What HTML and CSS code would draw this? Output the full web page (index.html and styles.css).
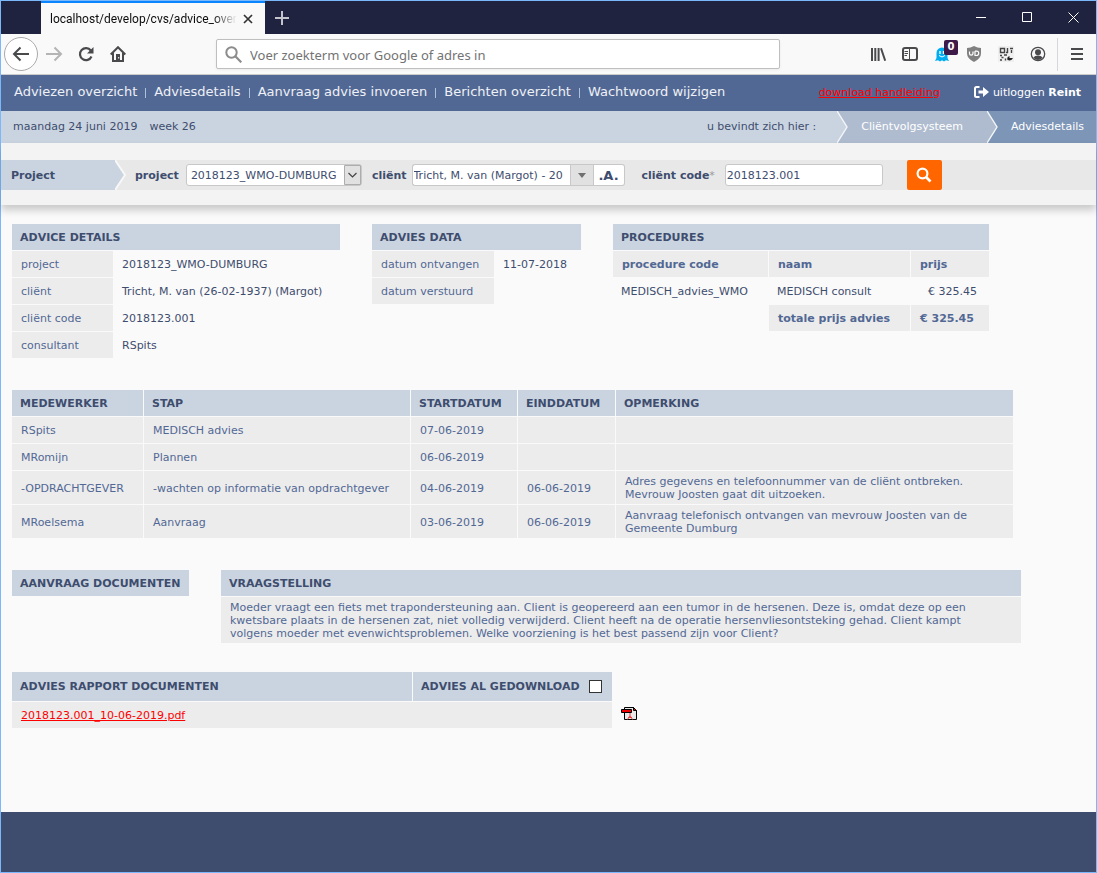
FILE: index.html
```html
<!DOCTYPE html>
<html lang="nl">
<head>
<meta charset="utf-8">
<meta name="viewport" content="width=device-width, initial-scale=1">
<title>Adviesdetails</title>
<link rel="stylesheet" href="styles.css">
</head>
<body>
<div class="window">
  <header class="titlebar">
    <div class="tab">
      <span class="tab-title">localhost/develop/cvs/advice_over</span>
      <button class="tab-close" aria-label="Tabblad sluiten"><svg width="10" height="10" viewBox="0 0 10 10"><path d="M1 1l8 8M9 1l-8 8" stroke="#333" stroke-width="1.7" fill="none"/></svg></button>
    </div>
    <button class="new-tab" aria-label="Nieuw tabblad"><svg width="14" height="14" viewBox="0 0 14 14"><path d="M7 0v14M0 7h14" stroke="#c4c4cc" stroke-width="2" fill="none"/></svg></button>
    <div class="window-buttons">
      <button aria-label="Minimaliseren"><svg width="11" height="11" viewBox="0 0 11 11"><path d="M0 5.500h10" stroke="#fff" fill="none"/></svg></button>
      <button aria-label="Maximaliseren"><svg width="11" height="11" viewBox="0 0 11 11"><path d="M.5.500h9v9h-9z" stroke="#fff" fill="none"/></svg></button>
      <button aria-label="Sluiten"><svg width="11" height="11" viewBox="0 0 11 11"><path d="M.5.500l10 10M10.500.500l-10 10" stroke="#fff" fill="none"/></svg></button>
    </div>
  </header>

  <div class="toolbar">
    <div class="toolbar-nav">
      <button class="back" aria-label="Terug"><svg width="18" height="16" viewBox="0 0 18 16"><path d="M17 8H2M8.500 1.500L2 8l6.500 6.500" stroke="#4a4a4d" stroke-width="2" fill="none"/></svg></button>
      <button aria-label="Vooruit"><svg width="18" height="16" viewBox="0 0 18 16"><path d="M1 8h15M9.500 1.500L16 8l-6.500 6.500" stroke="#b4b4b5" stroke-width="2" fill="none"/></svg></button>
      <button aria-label="Vernieuwen"><svg width="16" height="16" viewBox="0 0 16 16"><path d="M12.800 4.500A6 6 0 1 0 13.500 10.500" stroke="#4a4a4d" stroke-width="2.200" fill="none"/><path d="M15.500 1v6.500H9z" fill="#4a4a4d"/></svg></button>
      <button aria-label="Startpagina"><svg width="16" height="16" viewBox="0 0 16 16"><path d="M.7 8.500L8 1.200l7.300 7.300M3 7v8h10V7" stroke="#4a4a4d" stroke-width="2" fill="none"/><path d="M6 8h4v7H6z" fill="#4a4a4d"/><path d="M8.200 11h1v1.500h-1z" fill="#fff"/></svg></button>
    </div>
    <label class="urlbar">
      <svg width="17" height="17" viewBox="0 0 17 17"><circle cx="6.500" cy="6.500" r="5.200" stroke="#8c8c8c" stroke-width="2" fill="none"/><path d="M10.300 10.300l6 6" stroke="#8c8c8c" stroke-width="2.200"/></svg>
      <input type="text" placeholder="Voer zoekterm voor Google of adres in" aria-label="Adres">
    </label>
    <div class="toolbar-tools">
      <button aria-label="Bibliotheek"><svg width="16" height="16" viewBox="0 0 16 16"><path d="M2 2v13M5.300 2v13M8.600 2v13M11 2.300l4.200 12.400" stroke="#4a4a4d" stroke-width="2" fill="none"/></svg></button>
      <button aria-label="Zijbalk"><svg width="16" height="16" viewBox="0 0 16 16"><rect x="1" y="2" width="14" height="12" rx="2" stroke="#4a4a4d" stroke-width="2" fill="none"/><path d="M7.500 2v12M2.500 5.500H6M2.500 7.500H6M2.500 9.500H5" stroke="#4a4a4d" fill="none"/></svg></button>
      <button class="ghost" aria-label="Ghostery"><svg width="16" height="16" viewBox="0 0 16 16"><path d="M2.500 12V7a5.500 5.500 0 0 1 11 0v5l1.500 3-3-.8-2 1.300-2-1.200-2 1.200-2-1.200-3 .7z" fill="#00aef0"/><path d="M6 5v3M9.500 5v3" stroke="#fff" stroke-width="1.300"/><path d="M5 9.500q3 3 6 0" stroke="#fff" fill="none"/></svg><span class="badge">0</span></button>
      <button aria-label="uBlock"><svg width="16" height="16" viewBox="0 0 16 16"><path d="M8 0q3.500 2 7 2v5.500q0 5-7 8.500-7-3.500-7-8.500V2q3.500 0 7-2z" fill="#808080"/><path d="M3.500 5.500v2q0 1.700 1.700 1.700T7 7.500v-2M9 5v4.500h1.500q2.200 0 2.200-2.200T10.500 5.200H9" stroke="#fff" stroke-width="1.200" fill="none"/></svg></button>
      <button aria-label="QR-code"><svg width="16" height="16" viewBox="0 0 16 16"><path d="M0 0h16v16H0z" fill="#efefef"/><path d="M2.500 2.500h4v4h-4zM9.500 2v5M12 2.500h3M13.500 4v3M8 6.500h2M2 9.500h2M6 9h3M3.500 11.500h2M2 14h2M7.500 12.500v2" stroke="#444" stroke-width="1.400" fill="none"/><path d="M9.500 14q-1-3 2-4v2h3.500q-1.500 3.500-5.500 2z" fill="#222"/></svg></button>
      <button aria-label="Account"><svg width="16" height="16" viewBox="0 0 16 16"><circle cx="8" cy="8" r="6.700" stroke="#4a4a4d" stroke-width="1.300" fill="none"/><circle cx="8" cy="6.200" r="3" fill="#4a4a4d"/><path d="M3.300 11.500q1.700-2 4.700-2t4.700 2Q11 14 8 14t-4.700-2.500z" fill="#4a4a4d"/></svg></button>
      <span class="tool-divider"></span>
      <button aria-label="Menu"><svg width="14" height="14" viewBox="0 0 14 14"><path d="M1 2h12M1 7h12M1 12h12" stroke="#4a4a4d" stroke-width="2"/></svg></button>
    </div>
  </div>

  <nav class="mainnav">
    <ul class="menu">
      <li><a href="#">Adviezen overzicht</a></li>
      <li><a href="#">Adviesdetails</a></li>
      <li><a href="#">Aanvraag advies invoeren</a></li>
      <li><a href="#">Berichten overzicht</a></li>
      <li><a href="#">Wachtwoord wijzigen</a></li>
    </ul>
    <a class="manual" href="#">download handleiding</a>
    <a class="logout" href="#"><svg width="15" height="12" viewBox="0 0 15 12"><path d="M5.500 1H2.500Q1 1 1 2.500v7Q1 11 2.500 11h3" stroke="#fff" stroke-width="2" fill="none"/><path d="M4.500 4.500h4.500v-3.500l6 5-6 5v-3.500H4.500z" fill="#fff"/></svg><span>uitloggen <b>Reint</b></span></a>
  </nav>

  <div class="crumbs">
    <span>maandag 24 juni 2019</span>
    <span>week 26</span>
    <span class="here">u bevindt zich hier :</span>
    <a class="crumb crumb-mid" href="#"><svg width="12" height="32" viewBox="0 0 12 32"><path d="M0 0l10 16L0 32z" fill="#cad4e0"/><path d="M0 0l10 16L0 32" stroke="#f4f6f9" stroke-width="1.400" fill="none"/></svg><span>Cliëntvolgsysteem</span></a>
    <a class="crumb crumb-last" href="#"><svg width="12" height="32" viewBox="0 0 12 32"><path d="M0 0l10 16L0 32z" fill="#afbccf"/><path d="M0 0l10 16L0 32" stroke="#f4f6f9" stroke-width="1.400" fill="none"/></svg><span>Adviesdetails</span></a>
  </div>

  <form class="filter">
    <div class="filter-row">
      <div class="filter-title"><span>Project</span><svg width="12" height="30" viewBox="0 0 12 30"><path d="M0 0l10 15L0 30z" fill="#cad4e0"/><path d="M0 0l10 15L0 30" stroke="#f7f7f7" stroke-width="2" fill="none"/></svg></div>
      <label for="project">project</label>
      <span class="select">
        <select id="project"><option>2018123_WMO-DUMBURG</option></select>
        <svg class="select-arrow" width="17" height="20" viewBox="0 0 17 20"><path d="M.5.500h16v19H.5z" fill="#e1e1e1" stroke="#adadad"/><path d="M4.500 8l4 4 4-4" stroke="#444" stroke-width="1.200" fill="none"/></svg>
      </span>
      <label for="client">cliënt</label>
      <span class="combo">
        <input id="client" type="text" value="Tricht, M. van (Margot) - 20">
        <button type="button" class="combo-open" aria-label="Open lijst"><svg width="8" height="5" viewBox="0 0 8 5"><path d="M0 0h8L4 5z" fill="#707070"/></svg></button>
        <button type="button" class="combo-all">.A.</button>
      </span>
      <label class="code-label" for="code">cliënt code<span class="star">*</span></label>
      <input class="code" id="code" type="text" value="2018123.001">
      <button type="button" class="search" aria-label="Zoeken"><svg width="16" height="16" viewBox="0 0 16 16"><circle cx="6.500" cy="6.500" r="4.900" stroke="#fff" stroke-width="2.200" fill="none"/><path d="M10 10l4.500 4.500" stroke="#fff" stroke-width="2.600"/></svg></button>
    </div>
  </form>

  <main class="content">
    <section class="row">
      <table class="details">
        <thead><tr><th colspan="2">ADVICE DETAILS</th></tr></thead>
        <tbody>
          <tr><td>project</td><td class="plain">2018123_WMO-DUMBURG</td></tr>
          <tr><td>cliënt</td><td class="plain">Tricht, M. van (26-02-1937) (Margot)</td></tr>
          <tr><td>cliënt code</td><td class="plain">2018123.001</td></tr>
          <tr><td>consultant</td><td class="plain">RSpits</td></tr>
        </tbody>
      </table>
      <table class="dates">
        <thead><tr><th colspan="2">ADVIES DATA</th></tr></thead>
        <tbody>
          <tr><td>datum ontvangen</td><td class="plain">11-07-2018</td></tr>
          <tr><td>datum verstuurd</td><td class="plain"></td></tr>
        </tbody>
      </table>
      <table class="procedures">
        <colgroup><col class="w-code"><col class="w-name"><col class="w-price"></colgroup>
        <thead><tr><th colspan="3">PROCEDURES</th></tr></thead>
        <tbody>
          <tr class="strong"><td>procedure code</td><td>naam</td><td>prijs</td></tr>
          <tr><td class="plain">MEDISCH_advies_WMO</td><td class="plain">MEDISCH consult</td><td class="plain price">€ 325.45</td></tr>
          <tr class="strong"><td class="plain"></td><td>totale prijs advies</td><td>€ 325.45</td></tr>
        </tbody>
      </table>
    </section>

    <section class="row">
      <table class="steps">
        <colgroup><col class="w-staff"><col class="w-step"><col class="w-start"><col class="w-end"><col></colgroup>
        <thead><tr><th>MEDEWERKER</th><th>STAP</th><th>STARTDATUM</th><th>EINDDATUM</th><th>OPMERKING</th></tr></thead>
        <tbody>
          <tr><td>RSpits</td><td>MEDISCH advies</td><td>07-06-2019</td><td></td><td></td></tr>
          <tr><td>MRomijn</td><td>Plannen</td><td>06-06-2019</td><td></td><td></td></tr>
          <tr><td>-OPDRACHTGEVER</td><td>-wachten op informatie van opdrachtgever</td><td>04-06-2019</td><td>06-06-2019</td><td>Adres gegevens en telefoonnummer van de cliënt ontbreken.<br>Mevrouw Joosten gaat dit uitzoeken.</td></tr>
          <tr><td>MRoelsema</td><td>Aanvraag</td><td>03-06-2019</td><td>06-06-2019</td><td>Aanvraag telefonisch ontvangen van mevrouw Joosten van de<br>Gemeente Dumburg</td></tr>
        </tbody>
      </table>
    </section>

    <section class="row">
      <table class="requests">
        <thead><tr><th>AANVRAAG DOCUMENTEN</th></tr></thead>
      </table>
      <table class="question">
        <thead><tr><th>VRAAGSTELLING</th></tr></thead>
        <tbody><tr><td>Moeder vraagt een fiets met trapondersteuning aan. Client is geopereerd aan een tumor in de hersenen. Deze is, omdat deze op een<br>kwetsbare plaats in de hersenen zat, niet volledig verwijderd. Client heeft na de operatie hersenvliesontsteking gehad. Client kampt<br>volgens moeder met evenwichtsproblemen. Welke voorziening is het best passend zijn voor Client?</td></tr></tbody>
      </table>
    </section>

    <section class="row row-report">
      <table class="report">
        <colgroup><col class="w-doc"><col></colgroup>
        <thead><tr><th>ADVIES RAPPORT DOCUMENTEN</th><th><label class="check">ADVIES AL GEDOWNLOAD <input type="checkbox"></label></th></tr></thead>
        <tbody><tr><td colspan="2"><a class="pdf-link" href="#">2018123.001_10-06-2019.pdf</a></td></tr></tbody>
      </table>
      <a class="pdf" href="#" aria-label="PDF openen"><svg width="17" height="14" viewBox="0 0 17 14"><path d="M3.500.500h9l3 3v9h-12z" fill="#e8e8e8" stroke="#000"/><path d="M12.500.500v3h3z" fill="#f00" stroke="#000"/><path d="M.5 2.500h10v3H.5z" fill="#e00" stroke="#000"/><path d="M9 6v2.500l-2.500 4M9 8.500l2.500 4M7 10.500h4" stroke="#e44" fill="none"/></svg></a>
    </section>
  </main>

  <footer class="footer"></footer>
</div>
</body>
</html>
```

FILE: styles.css
```css
* { box-sizing: border-box; }

body {
  margin: 0;
  font-family: Verdana, "DejaVu Sans", sans-serif;
  font-size: 11px;
  line-height: 13px;
  color: #3e4d6e;
  background: #fafafa;
}

svg { display: block; flex: none; }

button {
  display: flex;
  align-items: center;
  justify-content: center;
  padding: 0;
  border: 0;
  background: none;
  font: inherit;
  color: inherit;
}

input, select { font: inherit; color: inherit; }

.window {
  display: flex;
  flex-direction: column;
  min-height: 100vh;
  border: 1px solid #7ab8fb;
}

/* browser chrome */
.titlebar {
  display: flex;
  height: 33px;
  padding-left: 40px;
  background: #20233f;
}

.tab {
  display: flex;
  align-items: center;
  width: 224px;
  padding: 0 9px;
  border-top: 2px solid #0a84ff;
  background: #f9f9fa;
  font-family: "Segoe UI", Roboto, sans-serif;
  font-size: 12px;
  line-height: 16px;
  color: #0c0c0d;
}

.tab-title {
  flex: none;
  white-space: nowrap;
  mask-image: linear-gradient(to left, transparent, #000 24px);
}

.tab-close { width: 16px; height: 16px; margin-left: auto; }
.new-tab { width: 34px; }

.window-buttons { display: flex; margin-left: auto; }
.window-buttons button { width: 46px; }

.toolbar {
  display: flex;
  align-items: center;
  height: 41px;
  padding: 0 3px;
  border-bottom: 1px solid #ccc;
  background: #f9f9fa;
}

.toolbar-nav { display: flex; align-items: center; width: 212px; }
.toolbar-nav button { width: 32px; height: 32px; }
.toolbar-nav .back {
  width: 34px;
  height: 34px;
  border: 1px solid #aaa;
  border-radius: 50%;
  background: #fff;
}

.urlbar {
  display: flex;
  flex: 1;
  align-items: center;
  gap: 8px;
  height: 30px;
  padding: 0 8px;
  border: 1px solid #bfbfbf;
  border-radius: 2px;
  background: #fff;
  box-shadow: 0 1px 3px rgba(0, 0, 0, .06);
}

.urlbar input {
  flex: 1;
  min-width: 0;
  padding: 1px 0 0;
  border: 0;
  outline: 0;
  background: none;
  font-family: "Segoe UI", "Noto Sans", sans-serif;
  font-size: 13px;
}

.urlbar input::placeholder { color: #737373; opacity: 1; }

.toolbar-tools { display: flex; align-items: center; margin-left: 82px; }
.toolbar-tools button { width: 32px; height: 32px; }
.tool-divider { width: 1px; height: 33px; margin: 0 3px; background: #d7d7db; }

.ghost { position: relative; }
.badge {
  position: absolute;
  top: 2px;
  right: 0;
  width: 14px;
  height: 15px;
  border-radius: 2px;
  background: #3e1a48;
  color: #fff;
  font-weight: bold;
  font-size: 10px;
  line-height: 14px;
}

/* site navigation */
.mainnav {
  display: flex;
  align-items: center;
  height: 36px;
  padding: 0 15px 2px 13px;
  background: #526894;
  color: #fff;
}

.mainnav a { color: #fff; text-decoration: none; white-space: nowrap; }

.menu { display: flex; margin: 0; padding: 0; list-style: none; font-size: 13px; line-height: 16px; }
.menu li { display: flex; align-items: center; }
.menu a { color: #eef1f6; }
.menu li + li::before {
  content: "";
  width: 1px;
  height: 10px;
  margin: 2px 8px 0;
  background: #a9c3dc;
}

.mainnav .manual { margin-left: auto; color: #f00; text-decoration: underline; }
.logout { display: flex; align-items: center; gap: 4px; margin-left: 34px; }

.crumbs {
  display: flex;
  align-items: center;
  gap: 12px;
  height: 32px;
  padding-left: 12px;
  background: #cad4e0;
  white-space: nowrap;
}

.here { margin-left: auto; margin-right: 9px; }
.crumb { display: flex; align-items: center; height: 32px; color: #fff; text-decoration: none; }
.crumb span { padding: 0 24px 2px 12px; }
.crumb-mid { background: #afbccf; }
.crumb-last { margin-left: -12px; background: #7d95b6; }
.crumb-last span { padding-right: 12px; }
.crumbs > span { padding-bottom: 2px; }

/* filter */
.filter {
  padding: 17px 0 15px;
  background: #f3f3f3;
  box-shadow: 0 5px 8px rgba(0, 0, 0, .2);
}

.filter-row {
  display: flex;
  align-items: center;
  height: 30px;
  background: #e8e8e8;
  font-weight: bold;
  white-space: nowrap;
}

.filter-title { display: flex; align-items: center; width: 126px; margin-right: 8px; }
.filter-title span { flex: 1; padding: 9px 10px 8px; background: #cad4e0; }

.filter-row input, .filter-row select {
  height: 22px;
  border: 1px solid #c8c8c8;
  border-radius: 3px;
  background: #fff;
  font-weight: normal;
}

.select { position: relative; width: 176px; margin: 0 10px 0 7px; }
.filter-row select { display: block; width: 100%; padding: 0 18px 0 4px; appearance: none; }
.select-arrow { position: absolute; top: 1px; right: 1px; pointer-events: none; }

.combo { display: flex; width: 213px; margin: 0 17px 0 5px; }
.filter-row .combo input { flex: 1; min-width: 0; padding: 0 0 0 1px; border-right: 0; border-radius: 3px 0 0 3px; }
.combo button { height: 22px; border: 1px solid #c8c8c8; }
.combo-open { width: 24px; background: #e1e1e1; }
.combo .combo-all { width: 31px; border-left: 0; border-radius: 0 3px 3px 0; background: #fff; font-size: 13px; }

.star { font-weight: normal; color: #999; }
.filter-row .code { width: 158px; margin: 0 24px 0 10px; padding: 0 1px; }
.search { width: 35px; height: 30px; border-radius: 2px; background: #f60; }

/* content */
.content {
  display: flex;
  flex: 1;
  flex-direction: column;
  gap: 30px;
  padding: 18px 10px;
}

.row { display: flex; align-items: flex-start; gap: 30px; }
.row-report { gap: 8px; margin-top: -3px; }

table { border-spacing: 1px; }

th {
  height: 26px;
  padding: 0 8px;
  background: #cad4e0;
  text-align: left;
  white-space: nowrap;
}

td {
  height: 26px;
  padding: 4px 9px 3px;
  background: #ececec;
  color: #526894;
}

td.plain { padding: 4px 8px 3px; background: none; color: #3e4d6e; }
td.price { padding-right: 12px; text-align: right; }
.strong td { font-weight: bold; }

.details { width: 330px; }
.details td:first-child { width: 101px; }
.dates { width: 211px; }
.dates td:first-child { width: 122px; white-space: nowrap; }
.procedures { width: 378px; }
.w-code { width: 155px; }
.w-name { width: 141px; }
.w-price { width: 78px; }

.steps { width: 1003px; table-layout: fixed; }
.w-staff { width: 131px; }
.w-step { width: 266px; }
.w-start { width: 106px; }
.w-end { width: 97px; }

.requests { width: 179px; }
.question { width: 802px; }

.report { width: 602px; table-layout: fixed; }
.w-doc { width: 400px; }
.report th { height: 29px; }
.check { display: flex; align-items: center; gap: 9px; }
.check input {
  width: 13px;
  height: 13px;
  margin: 0;
  border: 1px solid #333;
  background: #fff;
  appearance: none;
}
.pdf-link { color: #f00; }
.pdf { margin-top: 36px; }

.footer { height: 60px; background: #3e4d6e; }
```
